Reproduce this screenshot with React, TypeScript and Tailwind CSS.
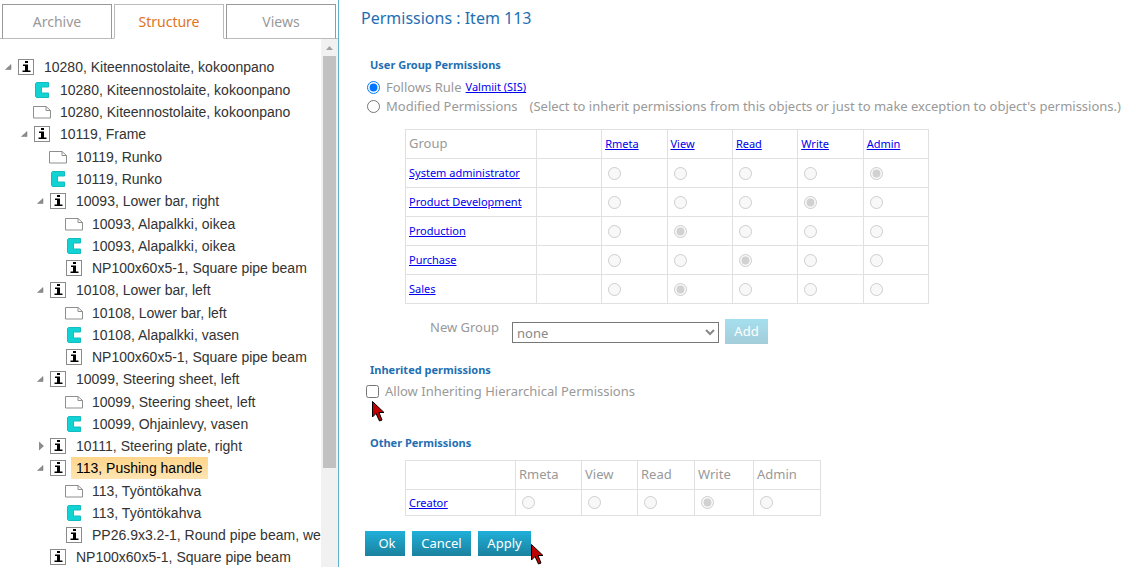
import { useState } from 'react';

type Kind = 'item' | 'model' | 'doc';

interface TreeNode {
  id: number;
  kind: Kind;
  label: string;
  collapsed?: boolean;
  children?: TreeNode[];
}

const tree: TreeNode[] = [
  {
    id: 1,
    kind: 'item',
    label: '10280, Kiteennostolaite, kokoonpano',
    children: [
      { id: 2, kind: 'model', label: '10280, Kiteennostolaite, kokoonpano' },
      { id: 3, kind: 'doc', label: '10280, Kiteennostolaite, kokoonpano' },
      {
        id: 4,
        kind: 'item',
        label: '10119, Frame',
        children: [
          { id: 5, kind: 'doc', label: '10119, Runko' },
          { id: 6, kind: 'model', label: '10119, Runko' },
          {
            id: 7,
            kind: 'item',
            label: '10093, Lower bar, right',
            children: [
              { id: 8, kind: 'doc', label: '10093, Alapalkki, oikea' },
              { id: 9, kind: 'model', label: '10093, Alapalkki, oikea' },
              { id: 10, kind: 'item', label: 'NP100x60x5-1, Square pipe beam' },
            ],
          },
          {
            id: 11,
            kind: 'item',
            label: '10108, Lower bar, left',
            children: [
              { id: 12, kind: 'doc', label: '10108, Lower bar, left' },
              { id: 13, kind: 'model', label: '10108, Alapalkki, vasen' },
              { id: 14, kind: 'item', label: 'NP100x60x5-1, Square pipe beam' },
            ],
          },
          {
            id: 15,
            kind: 'item',
            label: '10099, Steering sheet, left',
            children: [
              { id: 16, kind: 'doc', label: '10099, Steering sheet, left' },
              { id: 17, kind: 'model', label: '10099, Ohjainlevy, vasen' },
            ],
          },
          { id: 18, kind: 'item', label: '10111, Steering plate, right', collapsed: true },
          {
            id: 19,
            kind: 'item',
            label: '113, Pushing handle',
            children: [
              { id: 20, kind: 'doc', label: '113, Työntökahva' },
              { id: 21, kind: 'model', label: '113, Työntökahva' },
              { id: 22, kind: 'item', label: 'PP26.9x3.2-1, Round pipe beam, we' },
            ],
          },
          { id: 23, kind: 'item', label: 'NP100x60x5-1, Square pipe beam' },
        ],
      },
    ],
  },
];

const rights = ['Rmeta', 'View', 'Read', 'Write', 'Admin'];

const groups = [
  { name: 'System administrator', right: 'Admin' },
  { name: 'Product Development', right: 'Write' },
  { name: 'Production', right: 'View' },
  { name: 'Purchase', right: 'Read' },
  { name: 'Sales', right: 'View' },
];

const icons: { [key in Kind]: React.ReactNode } = {
  item: (
    <svg width="18" height="18" viewBox="0 0 18 18" className="shrink-0">
      <rect x="1.5" y="1.5" width="15" height="15" fill="#fff" stroke="#8a8a8a" />
      <path d="M8 3h3v2H8zM6 6.500h5v6h2.500V14h-8v-1.500H8V8H6z" fill="#000" />
    </svg>
  ),
  model: (
    <svg width="18" height="18" viewBox="0 0 18 18" className="shrink-0">
      <path d="M3.500 1.500h12v4.500h-7v6h7v4.500h-12l-1-1v-13z" fill="#11d3d3" stroke="#12bcbf" />
    </svg>
  ),
  doc: (
    <svg width="18" height="18" viewBox="0 0 18 18" className="shrink-0">
      <path d="M.5 3.500h12.500l4.500 4v7.500H.5z" fill="#fff" stroke="#8f8f8f" />
      <path d="M13 3.500v4h4.500" fill="none" stroke="#8f8f8f" />
    </svg>
  ),
};

function Toggle({ node }: { node: TreeNode }) {
  if (!node.children && !node.collapsed) return <span className="w-4 shrink-0" />;
  return (
    <button type="button" aria-label={node.label} className="flex w-4 shrink-0 justify-center">
      <svg width="8" height="10" viewBox="0 0 8 10">
        {node.collapsed ? (
          <path d="M2 .5l5 4.500-5 4.500z" fill="#8c8c8c" />
        ) : (
          <path d="M6 2.500v5H.5z" fill="#8c8c8c" stroke="#777" strokeWidth=".5" />
        )}
      </svg>
    </button>
  );
}

function Branch({
  nodes,
  selected,
  onSelect,
}: {
  nodes: TreeNode[];
  selected: number;
  onSelect: (id: number) => void;
}) {
  return (
    <>
      {nodes.map((node) => (
        <li key={node.id}>
          <div className="flex h-[22px] items-center">
            <Toggle node={node} />
            {icons[node.kind]}
            <button
              type="button"
              onClick={() => onSelect(node.id)}
              className={`ml-1 h-[22px] px-[5px] whitespace-nowrap ${
                selected === node.id
                  ? 'bg-linear-to-b from-[#ffd58a] to-[#ffe5b3] text-black'
                  : 'text-[#333]'
              }`}
            >
              {node.label}
            </button>
          </div>
          {node.children && (
            <ul className="pt-px pl-4">
              <Branch nodes={node.children} selected={selected} onSelect={onSelect} />
            </ul>
          )}
        </li>
      ))}
    </>
  );
}

function Tab({ label, active }: { label: string; active?: boolean }) {
  return (
    <button
      type="button"
      className={`h-[35px] flex-1 border text-sm ${
        active
          ? 'border-[#bbb] border-b-white text-[#e0731d]'
          : 'border-[#999] border-b-[#bbb] text-[#999]'
      }`}
    >
      {label}
    </button>
  );
}

function Pointer() {
  return (
    <svg
      width="13"
      height="21"
      viewBox="0 0 13 21"
      className="pointer-events-none absolute top-full left-full"
    >
      <path
        d="M.5.5v15.500l3.500-3.500 3.500 7.500 2.500-1-3-7.500h5z"
        fill="#c00000"
        stroke="#000"
      />
    </svg>
  );
}

function RightRadios({ group, value }: { group: string; value: string }) {
  return (
    <>
      {rights.map((right) => (
        <td key={right} className="border border-[#e0e0e0] pl-1.5">
          <input
            type="radio"
            name={group}
            aria-label={`${group} ${right}`}
            defaultChecked={right === value}
            disabled
            className="block size-[13px]"
          />
        </td>
      ))}
    </>
  );
}

const link = 'text-[11px] text-[#0000ee] underline';
const heading = 'pl-[9px] text-[11px] leading-5 font-bold text-[#1f6fb2]';
const cell = 'border border-[#e0e0e0] px-[3px] text-left font-normal';
const action = 'relative h-[25px] bg-linear-to-b from-[#1fb0d9] to-[#1b819f] text-white';

export default function App() {
  const [selected, setSelected] = useState(19);

  return (
    <div className="flex h-screen overflow-hidden bg-white font-['Noto_Sans','Open_Sans',sans-serif] text-[13px] text-[#999]">
      <aside className="flex w-[339px] shrink-0 flex-col border-r border-[#5fb3cc]">
        <nav className="flex gap-0.5 border-b border-[#bbb] px-0.5 pt-1 [&>button]:-mb-px">
          <Tab label="Archive" />
          <Tab label="Structure" active />
          <Tab label="Views" />
        </nav>
        <div className="flex min-h-0 flex-1">
          <ul className="flex-1 overflow-hidden pt-[17px] pl-px font-['Liberation_Sans',Arial,sans-serif] text-sm">
            <Branch nodes={tree} selected={selected} onSelect={setSelected} />
          </ul>
          <div className="flex w-[17px] flex-col items-center bg-[#f1f1f1]">
            <div className="flex h-[17px] items-center">
              <svg width="7" height="4" viewBox="0 0 7 4">
                <path d="M3.500 0L7 4H0z" fill="#a3a3a3" />
              </svg>
            </div>
            <div className="h-[78%] w-[13px] bg-[#c1c1c1]" />
          </div>
        </div>
      </aside>

      <main className="min-w-0 flex-1 pl-[22px]">
        <h1 className="text-base leading-9 text-[#1f6fb2]">Permissions : Item 113</h1>

        <h2 className={`mt-[19px] ${heading}`}>User Group Permissions</h2>
        <div className="mt-[3px] flex h-[19px] items-center gap-1 pl-1.5">
          <input id="follows" type="radio" name="mode" defaultChecked className="size-[13px]" />
          <label htmlFor="follows" className="pl-0.5">
            Follows Rule
          </label>
          <a href="#rule" className={link}>
            Valmiit (SIS)
          </a>
        </div>
        <div className="flex h-[19px] items-center gap-1 pl-1.5 whitespace-nowrap">
          <input id="modified" type="radio" name="mode" className="size-[13px]" />
          <label htmlFor="modified" className="pl-0.5">
            Modified Permissions
          </label>
          <span className="pl-2">
            (Select to inherit permissions from this objects or just to make exception to object's
            permissions.)
          </span>
        </div>

        <table className="mt-[13px] ml-11 w-[524px] table-fixed border-collapse">
          <thead>
            <tr className="h-[29px]">
              <th className={`w-1/4 ${cell}`}>Group</th>
              <th className={cell} />
              {rights.map((right) => (
                <th key={right} className={cell}>
                  <a href="#right" className={link}>
                    {right}
                  </a>
                </th>
              ))}
            </tr>
          </thead>
          <tbody>
            {groups.map((group) => (
              <tr key={group.name} className="h-[29px]">
                <td className={cell}>
                  <a href="#group" className={link}>
                    {group.name}
                  </a>
                </td>
                <td className={cell} />
                <RightRadios group={group.name} value={group.right} />
              </tr>
            ))}
          </tbody>
        </table>

        <div className="mt-[15px] flex h-[25px] items-end pl-[69px]">
          <label htmlFor="new-group" className="w-[82px] self-start leading-4">
            New Group
          </label>
          <select
            id="new-group"
            disabled
            className="mb-px h-[21px] w-[207px] border border-[#777] bg-white leading-4 text-[#888]"
          >
            <option>none</option>
          </select>
          <button
            type="button"
            disabled
            className="ml-1.5 h-[25px] w-[43px] bg-linear-to-b from-[#a5dfef] to-[#a4cdd9] text-white"
          >
            Add
          </button>
        </div>

        <h2 className={`mt-4 ${heading}`}>Inherited permissions</h2>
        <div className="mt-0.5 flex h-[19px] items-center gap-1 pl-[5px]">
          <span className="relative flex">
            <input id="inherit" type="checkbox" className="size-[13px]" />
            <span className="absolute top-[3px] left-1.5 size-0 pt-[13px]">
              <Pointer />
            </span>
          </span>
          <label htmlFor="inherit" className="pl-0.5">
            Allow Inheriting Hierarchical Permissions
          </label>
        </div>

        <h2 className={`mt-8 ${heading}`}>Other Permissions</h2>
        <table className="mt-[7px] ml-11 w-[416px] table-fixed border-collapse">
          <colgroup>
            <col className="w-[110px]" />
            <col className="w-[66px]" />
            <col className="w-14" />
            <col className="w-[57px]" />
            <col className="w-[59px]" />
            <col />
          </colgroup>
          <thead>
            <tr className="h-[29px]">
              <th className={cell} />
              {rights.map((right) => (
                <th key={right} className={cell}>
                  {right}
                </th>
              ))}
            </tr>
          </thead>
          <tbody>
            <tr className="h-[26px]">
              <td className={cell}>
                <a href="#creator" className={link}>
                  Creator
                </a>
              </td>
              <RightRadios group="Creator" value="Write" />
            </tr>
          </tbody>
        </table>

        <div className="mt-[15px] flex gap-[7px] pl-1">
          <button type="button" className={`w-10 pl-1 ${action}`}>
            Ok
          </button>
          <button type="button" className={`w-[59px] ${action}`}>
            Cancel
          </button>
          <button type="button" className={`w-[53px] ${action}`}>
            Apply
            <span className="absolute right-0 bottom-3">
              <Pointer />
            </span>
          </button>
        </div>
      </main>
    </div>
  );
}
